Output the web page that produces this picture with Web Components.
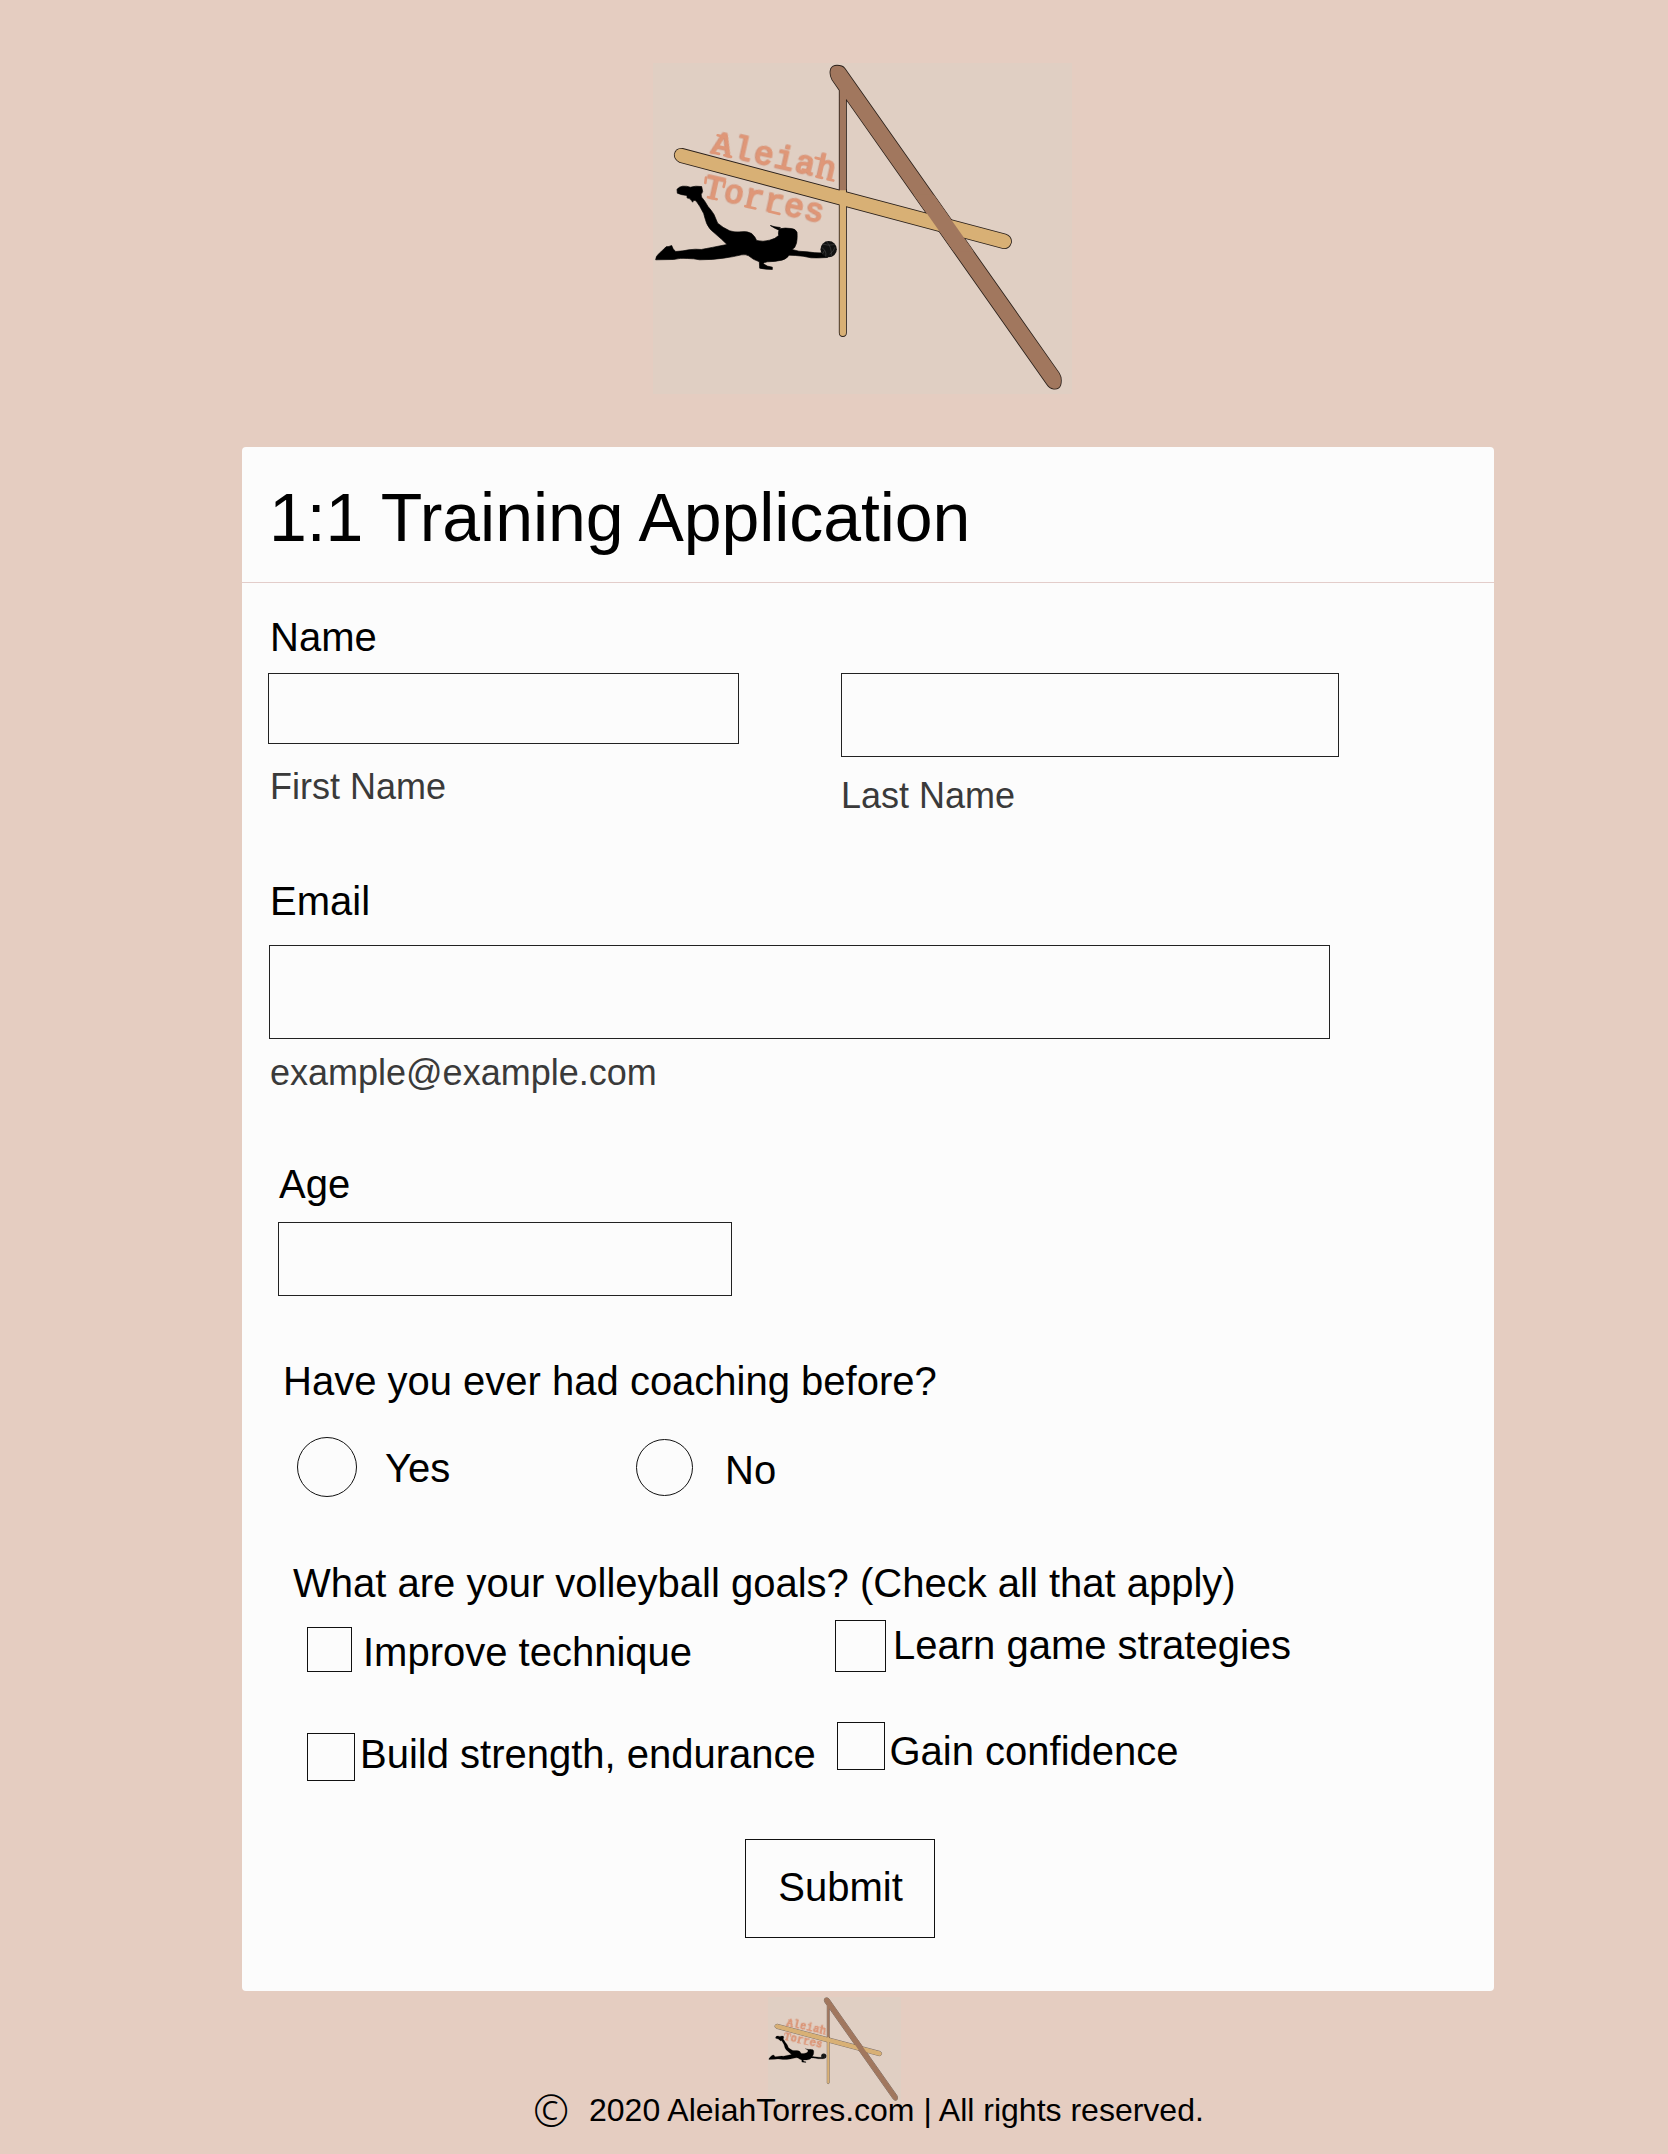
<!DOCTYPE html>
<html lang="en">
<head>
<meta charset="utf-8">
<title>1:1 Training Application</title>
<style>
  html, body { margin: 0; background: #e5cdc1; }
  body { font-family: "Liberation Sans", Arial, sans-serif; color: #000; }
</style>
</head>
<body>
<training-page></training-page>

<template id="t-logo">
  <style>
    :host { display: block; background: #e0cfc3; }
    svg { display: block; width: 100%; height: 100%; }
    text { font-family: "Liberation Mono", "Courier New", monospace; font-weight: 400; fill: #df9778; stroke: #df9778; stroke-width: 3.5; filter: drop-shadow(-1.5px 1.5px 0 #c9846a); }
  </style>
  <svg viewBox="38 38 1257 994" preserveAspectRatio="none">
    <defs>
      <path id="beam" d="M598 120L576 88Q567 72 572 56Q577 46 590 46Q606 46 613 55L1256 970Q1265 985 1260 1005Q1255 1018 1240 1016Q1228 1014 1220 1002L617 145V430H598Z"/>
      <path id="cross" d="M127 296L1096 553Q1114 560 1112 577Q1106 596 1089 594L118 335Q103 328 103 313Q107 294 127 296Z"/>
      <path id="post" d="M598 420H617V848Q617 858 607.500 858Q598 858 598 848Z"/>
    </defs>
    <g fill="none" stroke="#2b211b" stroke-width="5">
      <use href="#cross"/><use href="#post"/><use href="#beam"/>
    </g>
    <use href="#beam" fill="#a1775e"/>
    <use href="#post" fill="#d8b075"/>
    <use href="#cross" fill="#d8b075"/>
    <path fill="#a1775e" d="M820 434L880 434L1000 604L940 604Z"/>
    <text transform="translate(212 307) rotate(12.700)" font-size="97" textLength="378">Aleiah</text>
    <text transform="translate(188 438) rotate(12.700)" font-size="97" textLength="366">Torres</text>
    <!-- slab serifs on the wordmark capitals and stems -->
    <g stroke="#df9778" stroke-width="8" fill="none" stroke-linecap="round">
      <path d="M214 306L236 311M252 315L272 320M232 255L258 261"/>
      <path d="M197 382L195 398M254 394L250 410M203 441L229 447"/>
      <path d="M315 468L345 475M387 484L417 491"/>
      <path d="M487 358L500 361M528 379L545 383M562 387L579 391M526 323L538 326"/>
    </g>
    <path d="M110 418Q114 410 127 408Q140 407 150 411Q166 406 184 409L187 424Q180 434 184 441Q194 452 203 469Q214 481 221 493L232 519Q248 533 268 542Q283 547 302 545Q320 542 334 550Q345 560 349 571Q368 576 388 570Q404 567 415 556Q413 547 416 540Q401 534 390 526L404 530L420 532L417 536Q434 532 452 535Q466 536 470 546Q471 556 470 568Q470 580 463 592L455 598Q474 605 500 605Q524 609 545 608L562 622Q536 624 512 623Q488 617 465 616L446 615Q440 626 425 630Q403 635 381 635Q369 637 369 641Q380 650 396 651L396 658Q374 658 358 654L357 635Q338 629 325 617Q316 612 304 614Q280 620 250 624Q218 629 178 629Q160 625 141 625Q120 623 100 628L46 629Q46 618 57 609Q68 600 77 590Q86 590 94 586Q97 597 106 604Q130 603 145 599Q165 596 183 598Q210 593 260 583Q244 567 225 551Q205 536 199 520Q193 502 190 490Q178 466 167 452L160 450L157 456Q150 443 140 443L140 436Q122 434 111 429Z" stroke="#000" stroke-width="2"/>
    <circle cx="565" cy="597" r="24.500" fill="#111"/>
    <path d="M548 582Q564 588 583 583M544 592Q560 602 556 619M560 576Q575 592 573 618M584 591Q579 606 568 612M552 602L547 611" fill="none" stroke="#555" stroke-width="1.500"/>
  </svg>
</template>

<template id="t-field">
  <style>
    :host { display: flex; flex-direction: column; align-items: flex-start; flex: none; }
    .box { box-sizing: border-box; width: var(--w); height: var(--h); border: 1px solid #222; background: #fcfcfc; }
    .caption { margin: var(--gap) 0 0 var(--inset, 1px); font-size: 36px; line-height: 36px; color: #3a3a3a; white-space: nowrap; }
  </style>
  <div class="box" role="textbox"></div>
  <div class="caption"><slot></slot></div>
</template>

<template id="t-choice">
  <style>
    :host { display: flex; align-items: flex-start; flex: none; font-size: 40px; line-height: 40px; white-space: nowrap; }
    .mark { box-sizing: border-box; flex: none; width: var(--w); height: var(--h); border: 1px solid #111; border-radius: var(--r, 0); }
    .label { margin: var(--drop) 0 0 var(--gap); }
  </style>
  <div class="mark"></div>
  <div class="label"><slot></slot></div>
</template>

<template id="t-card">
  <style>
    :host { display: block; box-sizing: border-box; width: 1252px; height: 1544px; background: #fcfcfc; border-radius: 4px; }
    header { box-sizing: border-box; height: 136px; padding: 36px 0 0 27px; border-bottom: 1px solid #e3cdca; }
    h1 { margin: 0; font-weight: 400; font-size: 68px; line-height: 68px; white-space: nowrap; letter-spacing: -0.080px; }
  </style>
  <header><h1><slot name="title"></slot></h1></header>
  <slot></slot>
</template>

<template id="t-page">
  <style>
    :host { display: flex; flex-direction: column; align-items: flex-start; width: 1668px; height: 2154px; overflow: hidden; background: #e5cdc1; }
    .main-logo { width: 419px; height: 331px; margin: 63px 0 0 652.5px; }
    form-card { margin: 53px 0 0 242px; }
    .q { font-size: 40px; line-height: 40px; white-space: nowrap; }
    .row { display: flex; align-items: flex-start; }
    button { display: block; box-sizing: border-box; width: 190px; height: 99px; margin: 58px 0 0 503px; padding: 0 0 3px 1px; border: 1px solid #111; border-radius: 0; background: #fcfcfc; color: #000; font: 40px/40px "Liberation Sans", Arial, sans-serif; }
    footer { display: flex; flex-direction: column; align-items: flex-start; margin-top: 6px; }
    .foot-logo { width: 133px; height: 105px; margin-left: 768px; }
    .legal { display: flex; margin: -8px 0 0 533px; font-size: 32px; line-height: 32px; white-space: nowrap; position: relative; }
    .c { width: 56px; font-family: "Noto Sans", sans-serif; font-weight: 300; font-size: 43.500px; }
  </style>
  <brand-logo class="main-logo"></brand-logo>
  <form-card>
    <span slot="title">1:1 Training Application</span>
    <div class="q" style="margin:34px 0 0 28px">Name</div>
    <div class="row" style="margin:16px 0 0 26px">
      <text-field style="--w:471px;--h:71px;--gap:25px;--inset:2px">First Name</text-field>
      <text-field style="--w:498px;--h:84px;--gap:21px;--inset:0px;margin-left:102px">Last Name</text-field>
    </div>
    <div class="q" style="margin:67px 0 0 28px">Email</div>
    <text-field style="--w:1061px;--h:94px;--gap:16px;--inset:1px;margin:24px 0 0 27px">example@example.com</text-field>
    <div class="q" style="margin:73px 0 0 37px">Age</div>
    <text-field style="--w:454px;--h:74px;--gap:0px;margin:18px 0 0 35.5px;height:74px"></text-field>
    <div class="q" style="margin:65px 0 0 41px">Have you ever had coaching before?</div>
    <div class="row" style="margin:36px 0 0 54.500px;height:60px">
      <choice-item style="--w:60px;--h:60px;--r:50%;--drop:11px;--gap:28.500px;width:339.500px">Yes</choice-item>
      <choice-item style="--w:57px;--h:57px;--r:50%;--drop:11px;--gap:32px;margin-top:2px">No</choice-item>
    </div>
    <div class="q" style="margin:66px 0 0 51px">What are your volleyball goals? (Check all that apply)</div>
    <div class="row" style="margin:17px 0 0 65px;height:52px">
      <choice-item style="--w:45px;--h:45px;--drop:5px;--gap:11px;width:528px;margin-top:7px">Improve technique</choice-item>
      <choice-item style="--w:51px;--h:52px;--drop:5px;--gap:7px">Learn game strategies</choice-item>
    </div>
    <div class="row" style="margin:50px 0 0 65px;height:59px">
      <choice-item style="--w:48px;--h:48px;--drop:1px;--gap:5px;width:530px;margin-top:11px">Build strength, endurance</choice-item>
      <choice-item style="--w:48px;--h:48px;--drop:9px;--gap:4.500px">Gain confidence</choice-item>
    </div>
    <button type="button">Submit</button>
  </form-card>
  <footer>
    <brand-logo class="foot-logo"></brand-logo>
    <div class="legal"><span class="c">©</span><span>2020 AleiahTorres.com | All rights reserved.</span></div>
  </footer>
</template>

<script>
  const register = (name, templateId) => customElements.define(name, class extends HTMLElement {
    constructor() {
      super();
      this.attachShadow({ mode: "open" })
        .append(document.getElementById(templateId).content.cloneNode(true));
    }
  });
  register("brand-logo", "t-logo");
  register("text-field", "t-field");
  register("choice-item", "t-choice");
  register("form-card", "t-card");
  register("training-page", "t-page");
</script>
</body>
</html>
